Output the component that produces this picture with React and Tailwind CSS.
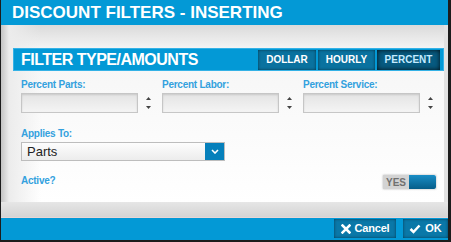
import React from "react";

function Spinner() {
  return (
    <div className="flex flex-col items-center justify-center gap-[6px] w-[10px] h-[20px]">
      <svg width="5" height="3" viewBox="0 0 5 3"><path d="M2.5 0 L5 3 L0 3 Z" fill="#444" /></svg>
      <svg width="5" height="3" viewBox="0 0 5 3"><path d="M0 0 L5 0 L2.5 3 Z" fill="#444" /></svg>
    </div>
  );
}

function Field({ label }) {
  return (
    <div className="flex flex-col w-[141px]">
      <div className="text-[10px] font-bold text-[#33a1de] leading-[12px] h-[12px] mb-[2px] tracking-[-0.25px]">{label}</div>
      <div className="flex items-center gap-[5px]">
        <div className="w-[117px] h-[20px] border border-[#c6c6c6] bg-gradient-to-b from-[#e4e4e4] to-[#f4f4f4] shadow-[inset_0_1px_2px_rgba(0,0,0,0.12)]" />
        <Spinner />
      </div>
    </div>
  );
}

export default function App() {
  return (
    <div
      className="w-[451px] h-[242px] bg-[#1c1c1c] pl-[1px] pr-[3px] pb-[2px] flex flex-col"
      style={{ fontFamily: '"Liberation Sans", Arial, sans-serif' }}
    >
      <div className="h-[25px] bg-[#0399d6] flex items-center pl-[11px] shrink-0">
        <span className="text-white font-bold text-[17px] leading-none">DISCOUNT FILTERS - INSERTING</span>
      </div>
      <div className="h-[177px] flex bg-gradient-to-b from-[#dadada] via-[#f6f6f6] via-[14%] to-white relative shrink-0">
        <div className="absolute left-0 top-0 bottom-0 w-[40px] bg-gradient-to-r from-[#c4c4c4] via-[#ececec] via-[20%] to-transparent pointer-events-none" />
        <div className="relative flex-1 flex flex-col pl-[12px] pr-[0px] pt-[23px]">
          <div className="h-[23px] bg-[#0399d6] flex items-center justify-between pl-[7px] pr-[3px] border border-[#35b2e6]">
            <span className="text-white font-bold text-[16px] leading-none tracking-[-0.5px]">FILTER TYPE/AMOUNTS</span>
            <div className="flex gap-[2px]">
              <div className="h-[20px] w-[58px] flex items-center justify-center bg-[#0a729f] text-white font-bold text-[10px] shadow-[inset_0_0_3px_rgba(0,0,0,0.55)]">DOLLAR</div>
              <div className="h-[20px] w-[57px] flex items-center justify-center bg-[#0a729f] text-white font-bold text-[10px] shadow-[inset_0_0_3px_rgba(0,0,0,0.55)]">HOURLY</div>
              <div className="h-[20px] w-[63px] flex items-center justify-center bg-[#075a80] text-[#c4ebff] font-bold text-[10px] shadow-[inset_0_0_5px_rgba(0,0,0,0.85)]">PERCENT</div>
            </div>
          </div>
          <div className="flex pl-[8px] mt-[8px]">
            <Field label="Percent Parts:" />
            <Field label="Percent Labor:" />
            <Field label="Percent Service:" />
          </div>
          <div className="pl-[8px] mt-[15px] text-[10px] font-bold text-[#33a1de] leading-[12px] h-[12px] tracking-[-0.25px]">Applies To:</div>
          <div className="ml-[8px] mt-[2px] w-[204px] h-[19px] flex border border-[#bdbdbd] bg-gradient-to-b from-[#fdfdfd] to-[#ececec]">
            <div className="flex-1 flex items-center pl-[5px] text-[13px] text-[#222]">Parts</div>
            <div className="w-[19px] h-full bg-[#0680bb] flex items-center justify-center">
              <svg width="8" height="5" viewBox="0 0 8 5"><path d="M1 1 L4 4 L7 1" stroke="white" strokeWidth="1.6" fill="none" /></svg>
            </div>
          </div>
          <div className="flex items-start justify-between pl-[8px] mt-[14px] pr-[8px]">
            <div className="text-[10px] font-bold text-[#33a1de] leading-[12px] tracking-[-0.25px]">Active?</div>
            <div className="flex h-[14px] w-[53px] shadow-[0_0_2px_rgba(0,0,0,0.3)]">
              <div className="w-[26px] bg-[#d3d3d3] text-[#707070] text-[10px] font-bold flex items-center justify-center">YES</div>
              <div className="w-[27px] bg-gradient-to-b from-[#1a8ec6] to-[#065e8a] rounded-r-[2px]" />
            </div>
          </div>
        </div>
        <div className="w-[7px] bg-[#e2e2e2] relative" />
      </div>
      <div className="h-[16px] bg-gradient-to-b from-[#e6e6e6] to-[#d4d4d4] border-b border-[#e8d6d6] shrink-0" />
      <div className="h-[22px] bg-[#0399d6] flex justify-end items-start gap-[7px] pt-[1px] shrink-0">
        <div className="h-[19px] w-[62px] flex items-center justify-center gap-[4px] bg-[#0a78a8] text-white font-bold text-[11px] shadow-[inset_0_0_3px_rgba(0,0,0,0.5)]">
          <svg width="10" height="10" viewBox="0 0 10 10"><path d="M1.5 1.5 L8.5 8.5 M8.5 1.5 L1.5 8.5" stroke="white" strokeWidth="2.5" strokeLinecap="square" /></svg>
          <span className="tracking-[-0.2px]">Cancel</span>
        </div>
        <div className="h-[19px] w-[45px] flex items-center justify-center gap-[4px] bg-[#0a78a8] text-white font-bold text-[11px] shadow-[inset_0_0_3px_rgba(0,0,0,0.5)]">
          <svg width="12" height="10" viewBox="0 0 12 10"><path d="M1.5 5 L4.5 8 L10.5 1.5" stroke="white" strokeWidth="2.5" fill="none" /></svg>
          OK
        </div>
      </div>
    </div>
  );
}
